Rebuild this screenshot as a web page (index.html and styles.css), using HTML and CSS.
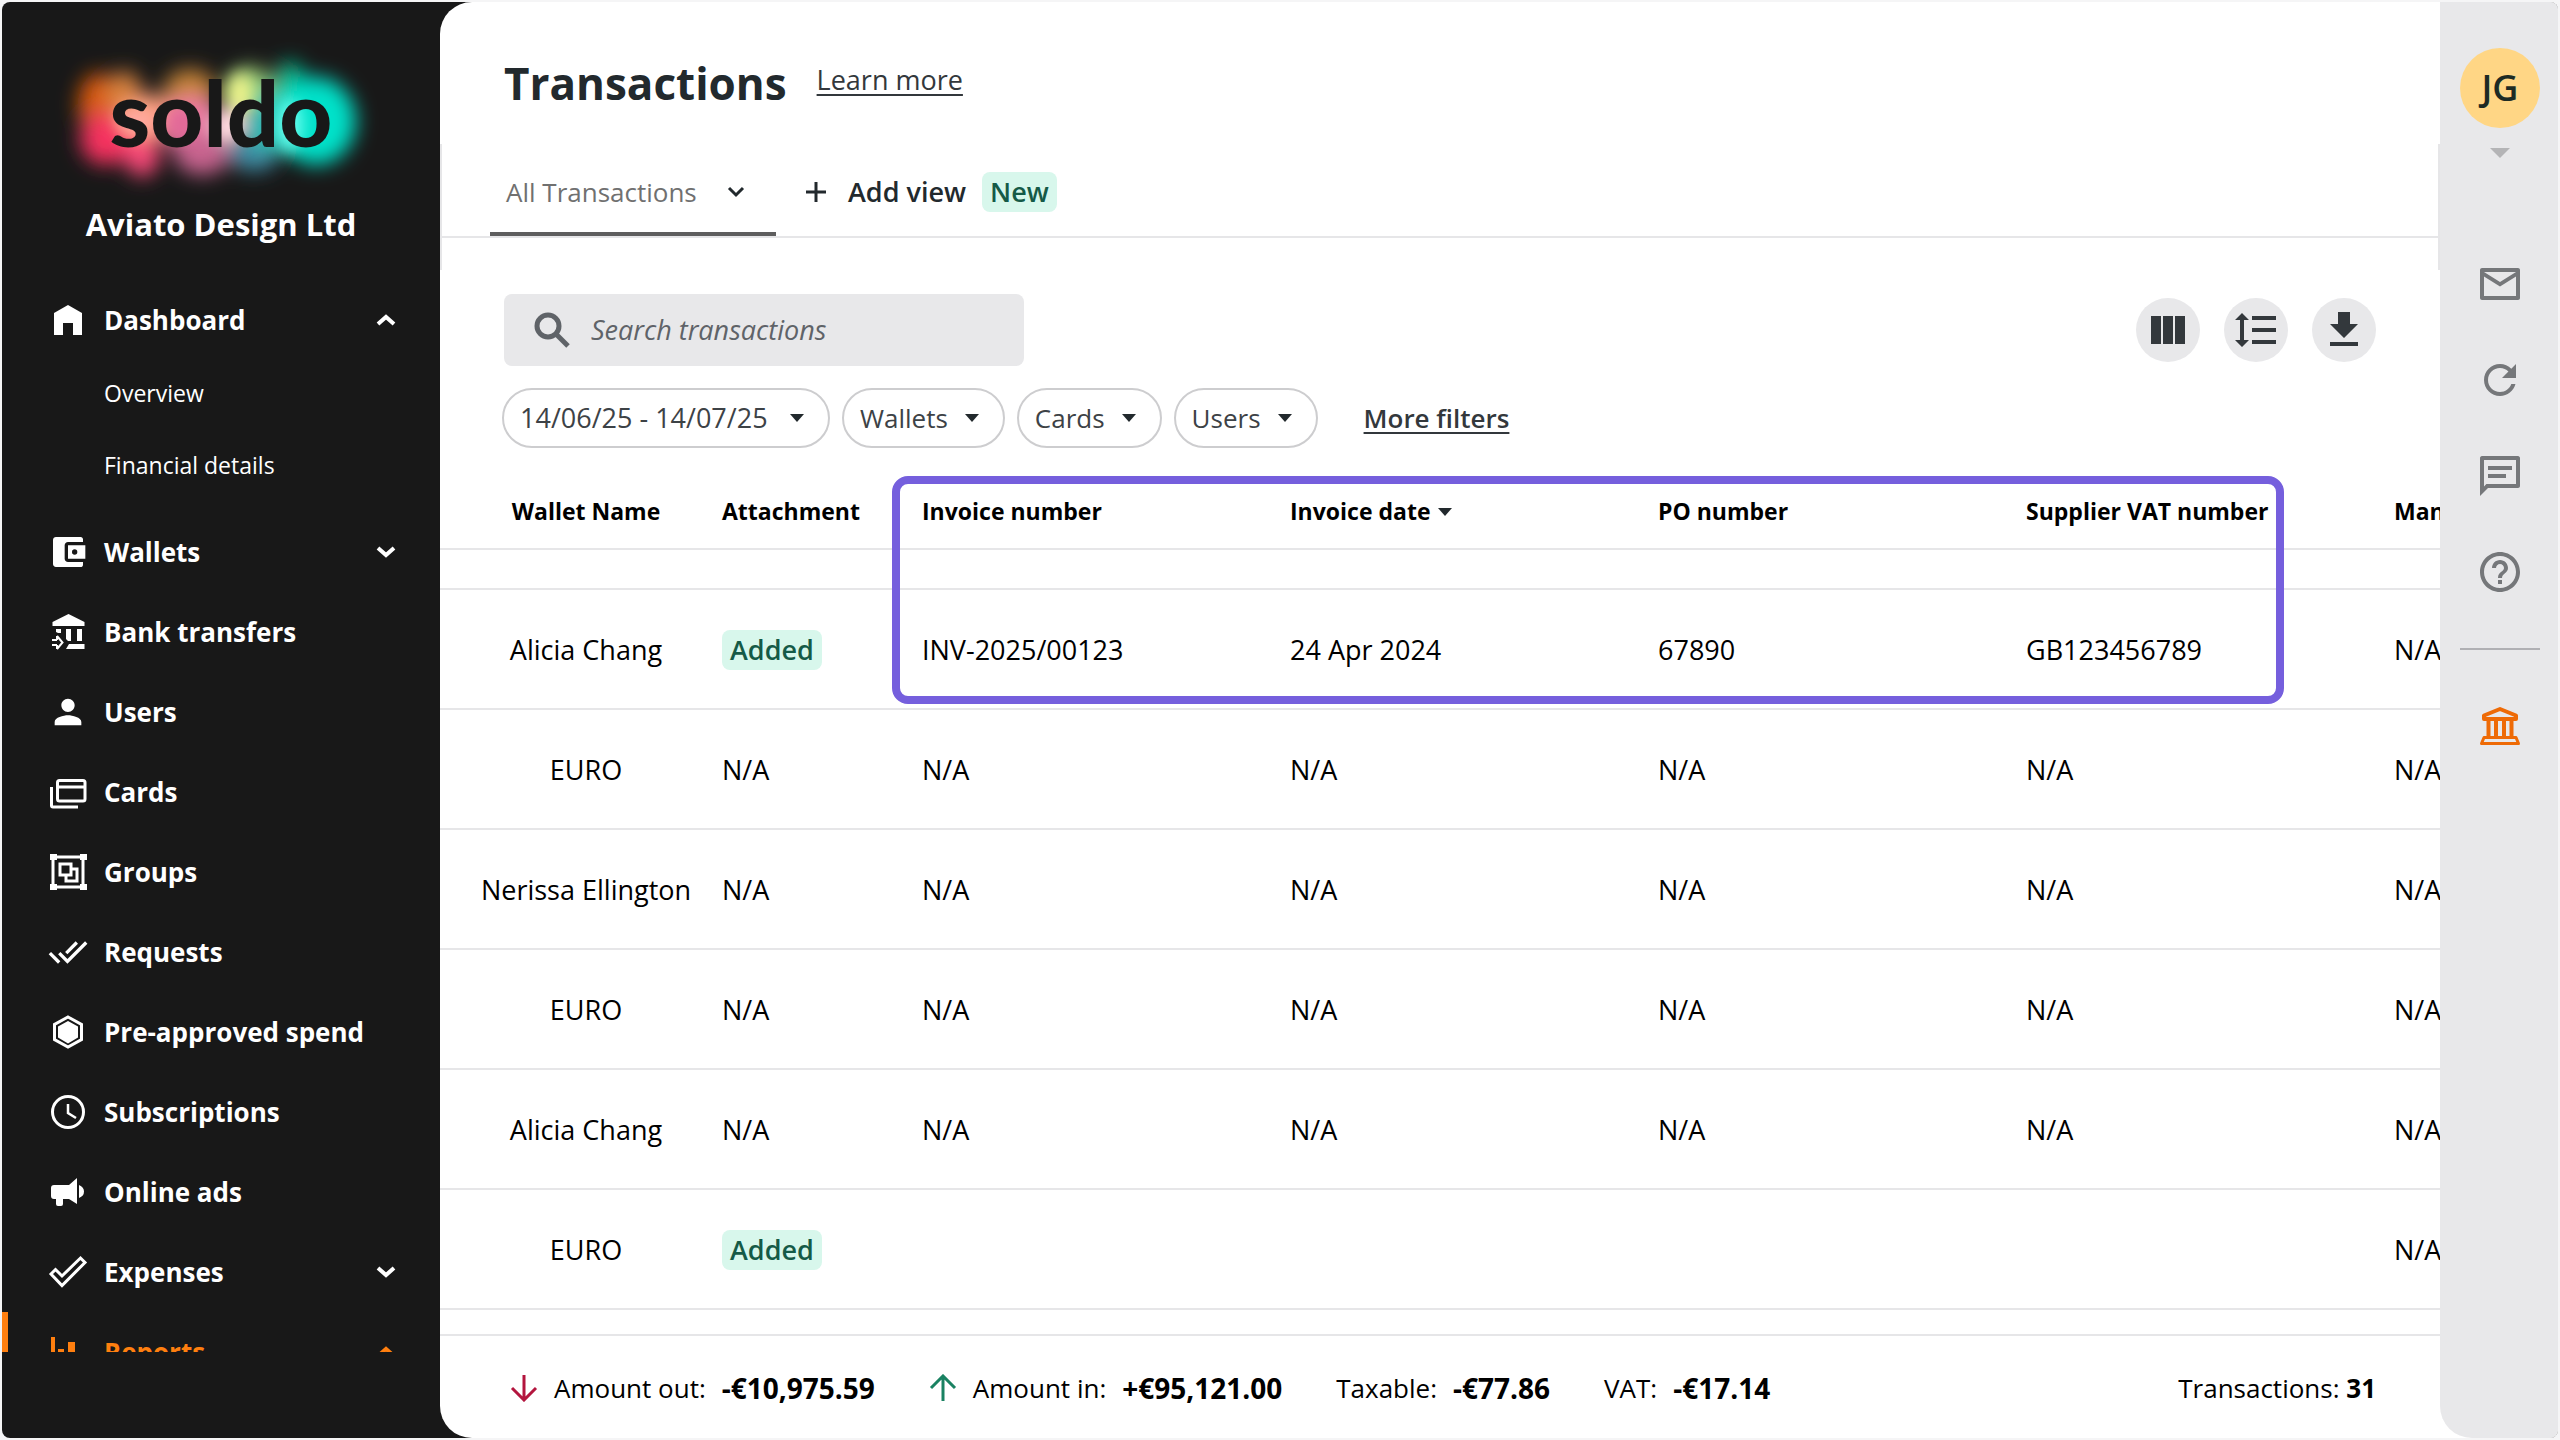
FILE: index.html
```html
<!DOCTYPE html>
<html lang="en">
<head>
<meta charset="utf-8">
<title>Transactions - Soldo</title>
<meta name="viewport" content="width=device-width, initial-scale=1">
<link rel="stylesheet" href="styles.css">
</head>
<body>
<div class="app">
  <aside class="sidebar">
    <div class="brand">
      <svg class="logo" viewBox="0 0 320 160" role="img" aria-label="soldo">
        <defs>
          <filter id="glow" x="-30%" y="-30%" width="160%" height="160%"><feGaussianBlur stdDeviation="10"/></filter>
          <filter id="soft" x="-30%" y="-30%" width="160%" height="160%"><feGaussianBlur stdDeviation="8"/></filter>
        </defs>
        <g transform="translate(-9 1)">
          <g filter="url(#glow)">
            <ellipse cx="46" cy="64" rx="20" ry="32" fill="#d8580a"/>
            <ellipse cx="72" cy="54" rx="18" ry="24" fill="#d8823c"/>
            <ellipse cx="54" cy="98" rx="26" ry="26" fill="#f4305e"/>
            <ellipse cx="90" cy="112" rx="18" ry="24" fill="#f84a78"/>
            <ellipse cx="98" cy="76" rx="28" ry="22" fill="#ffa07a"/>
            <ellipse cx="138" cy="50" rx="26" ry="22" fill="#c98538"/>
            <ellipse cx="140" cy="84" rx="30" ry="28" fill="#f07aa4"/>
            <ellipse cx="150" cy="112" rx="28" ry="22" fill="#c8648f"/>
            <ellipse cx="198" cy="50" rx="24" ry="24" fill="#98cf78"/>
            <ellipse cx="202" cy="110" rx="26" ry="20" fill="#3f8ba4"/>
            <ellipse cx="218" cy="80" rx="24" ry="30" fill="#30bdb0"/>
            <ellipse cx="238" cy="46" rx="16" ry="26" fill="#08b488"/>
            <ellipse cx="264" cy="80" rx="40" ry="44" fill="#00e2ca"/>
          </g>
          <g filter="url(#soft)">
            <ellipse cx="188" cy="54" rx="12" ry="22" fill="#f2f58c"/>
            <ellipse cx="176" cy="86" rx="18" ry="18" fill="#ffd9e0"/>
            <ellipse cx="84" cy="80" rx="20" ry="14" fill="#ffa9a0"/>
            <ellipse cx="238" cy="84" rx="12" ry="26" fill="#6ffff0"/>
            <circle cx="130" cy="82" r="14" fill="#e06696"/>
            <circle cx="206" cy="84" r="12" fill="#28b4b4"/>
          </g>
        </g>
        <text class="logo-text" x="160" y="107" text-anchor="middle">soldo</text>
      </svg>
      <p class="company">Aviato Design Ltd</p>
    </div>
    <nav class="nav" aria-label="Main">
      <ul class="nav-list">
        <li>
          <button class="nav-item" type="button" aria-expanded="true">
            <svg class="nav-icon" viewBox="0 0 40 40"><path fill="currentColor" d="M20 5l14 8v22H25V23H15v12H6V13z"/></svg>
            <span>Dashboard</span>
            <svg class="nav-chevron" viewBox="0 0 20 12"><path d="M2 10l8-7 8 7"/></svg>
          </button>
          <ul class="subnav">
            <li><a href="#overview">Overview</a></li>
            <li><a href="#financial">Financial details</a></li>
          </ul>
        </li>
        <li>
          <button class="nav-item" type="button" aria-expanded="false">
            <svg class="nav-icon" viewBox="0 0 24 24"><path fill="currentColor" d="M21 18v1.600c0 .8-.6 1.400-1.400 1.400H4.800C3.800 21 3 20.200 3 19.200V4.800C3 3.800 3.800 3 4.800 3h14.800c.8 0 1.400.6 1.400 1.400V6h-9c-1.110 0-2 .9-2 2v8c0 1.100.89 2 2 2zm-9-2h10.400V8H12zm4-2.400a1.600 1.600 0 1 1 0-3.200 1.600 1.600 0 0 1 0 3.200z"/></svg>
            <span>Wallets</span>
            <svg class="nav-chevron" viewBox="0 0 20 12"><path d="M2 2l8 7 8-7"/></svg>
          </button>
        </li>
        <li>
          <a class="nav-item" href="#bank">
            <svg class="nav-icon" viewBox="0 0 40 40"><path fill="currentColor" d="M20.500 2L36.500 10v4h-32v-4zM8 17h5v4H10l-2-1zM18 17h5v12h-3l-2-2zM29 17h5v12h-5zM21 32h15.500v5H18z"/><path fill="none" stroke="currentColor" stroke-width="2" d="M4 28h5M4 33h5M9 24v4M9 37v-4M9 24l5.500 6.500L9 37"/></svg>
            <span>Bank transfers</span>
          </a>
        </li>
        <li>
          <a class="nav-item" href="#users">
            <svg class="nav-icon" viewBox="0 0 24 24"><path fill="currentColor" d="M12 12c2.210 0 4-1.790 4-4s-1.790-4-4-4-4 1.790-4 4 1.790 4 4 4zm0 2c-2.670 0-8 1.340-8 4v2h16v-2c0-2.660-5.330-4-8-4z"/></svg>
            <span>Users</span>
          </a>
        </li>
        <li>
          <a class="nav-item" href="#cards">
            <svg class="nav-icon" viewBox="0 0 40 40"><g fill="none" stroke="currentColor" stroke-width="3"><rect x="9.500" y="8.500" width="27.500" height="20.500" rx="2"/><path d="M9 15h28M3.500 15v18.500q0 1.500 1.500 1.500h25"/></g></svg>
            <span>Cards</span>
          </a>
        </li>
        <li>
          <a class="nav-item" href="#groups">
            <svg class="nav-icon" viewBox="0 0 40 40"><path fill="currentColor" d="M2 2h7v6H2zM32 2h7v6h-7zM2 32h7v6H2zM32 32h7v6h-7z"/><g fill="none" stroke="currentColor" stroke-width="3"><path d="M5 5h30v30H5z"/><path d="M12 12h11v11H12zM23 17h6v12H18v-6"/></g></svg>
            <span>Groups</span>
          </a>
        </li>
        <li>
          <a class="nav-item" href="#requests">
            <svg class="nav-icon" viewBox="0 0 24 24"><path fill="currentColor" d="M18 7l-1.410-1.410-6.340 6.340 1.410 1.410L18 7zm4.240-1.410L11.660 16.170 7.480 12l-1.410 1.410L11.660 19l12-12-1.420-1.410zM.41 13.410L6 19l1.410-1.410L1.830 12 .41 13.410z"/></svg>
            <span>Requests</span>
          </a>
        </li>
        <li>
          <a class="nav-item" href="#preapproved">
            <svg class="nav-icon" viewBox="0 0 40 40"><path fill="none" stroke="currentColor" stroke-width="3" d="M20 5l13.500 7.500v15L20 35 6.500 27.500v-15z"/><path fill="currentColor" d="M20 9l10 5.500v11L20 31.500 10 25.500v-11z"/></svg>
            <span>Pre-approved spend</span>
          </a>
        </li>
        <li>
          <a class="nav-item" href="#subscriptions">
            <svg class="nav-icon" viewBox="0 0 40 40"><g fill="none" stroke="currentColor" stroke-width="3"><circle cx="20" cy="20" r="15.500"/><path stroke-width="2.500" d="M20 12v9l8 5"/></g></svg>
            <span>Subscriptions</span>
          </a>
        </li>
        <li>
          <a class="nav-item" href="#ads">
            <svg class="nav-icon" viewBox="0 0 40 40"><path fill="currentColor" d="M6 13h15l8-7v26l-8-5h-6v5q0 2-2 2h-3q-2 0-2-2v-5H6q-3 0-3-3v-8q0-3 3-3zM31 13q5 2 5 6.500T31 26z"/></svg>
            <span>Online ads</span>
          </a>
        </li>
        <li>
          <button class="nav-item" type="button" aria-expanded="false">
            <svg class="nav-icon" viewBox="0 0 40 40"><path fill="none" stroke="currentColor" stroke-width="3" d="M3 22l4.500-4.500L14 24 32.500 6l4.500 4.500L14 33.500z"/></svg>
            <span>Expenses</span>
            <svg class="nav-chevron" viewBox="0 0 20 12"><path d="M2 2l8 7 8-7"/></svg>
          </button>
        </li>
        <li>
          <button class="nav-item active" type="button" aria-expanded="true">
            <svg class="nav-icon" viewBox="0 0 40 40"><path fill="currentColor" d="M3 5h4v28h30v4H3zM10 17h6v13h-6zM20 10h7v20h-7zM30 21h6v9h-6z"/></svg>
            <span>Reports</span>
            <svg class="nav-chevron" viewBox="0 0 20 12"><path d="M2 10l8-7 8 7"/></svg>
          </button>
        </li>
      </ul>
    </nav>
  </aside>

  <div class="content">
    <main class="main">
      <header class="page-head">
        <h1>Transactions</h1>
        <a class="learn" href="#learn">Learn more</a>
      </header>
      <div class="views">
        <div class="tabs">
          <button class="tab" type="button">All Transactions
            <svg class="tab-chevron" viewBox="0 0 20 12"><path d="M3 2l7 7 7-7"/></svg>
          </button>
          <button class="add-view" type="button">
            <svg class="plus" viewBox="0 0 20 20"><path d="M10 0v20M0 10h20"/></svg>
            Add view <span class="badge">New</span>
          </button>
        </div>
      </div>
      <div class="tools">
        <label class="search">
          <svg class="search-icon" viewBox="0 0 36 36"><circle cx="14" cy="14" r="11"/><path d="M21.500 21.500L34 34"/></svg>
          <input type="search" placeholder="Search transactions" aria-label="Search transactions">
        </label>
        <div class="actions">
          <button class="round" type="button" aria-label="Columns"><svg viewBox="0 0 48 48"><path d="M7 10h10v28H7zM19 10h10v28H19zM31 10h10v28H31z"/></svg></button>
          <button class="round" type="button" aria-label="Row height"><svg viewBox="0 0 24 24"><path d="M6 7h2.500L5 3.500 1.500 7H4v10H1.500L5 20.500 8.500 17H6V7zm4-2v2h12V5H10zm0 14h12v-2H10v2zm0-6h12v-2H10v2z"/></svg></button>
          <button class="round" type="button" aria-label="Download"><svg viewBox="0 0 24 24"><path d="M19 9h-4V3H9v6H5l7 7 7-7zM5 18v2h14v-2H5z"/></svg></button>
        </div>
      </div>
      <div class="filters">
        <button class="pill dates" type="button">14/06/25 - 14/07/25 <span class="caret"></span></button>
        <button class="pill" type="button">Wallets <span class="caret"></span></button>
        <button class="pill" type="button">Cards <span class="caret"></span></button>
        <button class="pill" type="button">Users <span class="caret"></span></button>
        <a class="more" href="#filters">More filters</a>
      </div>
      <div class="table-wrap">
        <table>
          <colgroup><col class="c-name"><col class="c-att"><col class="c-data"><col class="c-data"><col class="c-data"><col class="c-data"><col class="c-data"></colgroup>
          <thead>
            <tr><th>Wallet Name</th><th>Attachment</th><th>Invoice number</th><th aria-sort="descending">Invoice date<span class="caret sort"></span></th><th>PO number</th><th>Supplier VAT number</th><th>Man</th></tr>
          </thead>
          <tbody>
            <tr class="partial"><td colspan="7"></td></tr>
            <tr><td>Alicia Chang</td><td><span class="badge">Added</span></td><td>INV-2025/00123</td><td>24 Apr 2024</td><td>67890</td><td>GB123456789</td><td>N/A</td></tr>
            <tr><td>EURO</td><td>N/A</td><td>N/A</td><td>N/A</td><td>N/A</td><td>N/A</td><td>N/A</td></tr>
            <tr><td>Nerissa Ellington</td><td>N/A</td><td>N/A</td><td>N/A</td><td>N/A</td><td>N/A</td><td>N/A</td></tr>
            <tr><td>EURO</td><td>N/A</td><td>N/A</td><td>N/A</td><td>N/A</td><td>N/A</td><td>N/A</td></tr>
            <tr><td>Alicia Chang</td><td>N/A</td><td>N/A</td><td>N/A</td><td>N/A</td><td>N/A</td><td>N/A</td></tr>
            <tr><td>EURO</td><td><span class="badge">Added</span></td><td></td><td></td><td></td><td></td><td>N/A</td></tr>
          </tbody>
        </table>
        <div class="highlight"></div>
      </div>
      <footer class="totals">
        <div class="total out"><svg class="arrow" viewBox="0 0 28 28"><path d="M14 1v25M2 14l12 12 12-12"/></svg>Amount out: <b>-€10,975.59</b></div>
        <div class="total in"><svg class="arrow" viewBox="0 0 28 28"><path d="M14 27V2M2 14L14 2l12 12"/></svg>Amount in: <b>+€95,121.00</b></div>
        <div class="total">Taxable: <b>-€77.86</b></div>
        <div class="total">VAT: <b>-€17.14</b></div>
        <div class="count">Transactions: <b>31</b></div>
      </footer>
    </main>

    <aside class="rail">
      <button class="avatar" type="button">JG</button>
      <span class="caret rail-caret"></span>
      <div class="rail-icons">
        <button type="button" aria-label="Messages"><svg viewBox="0 0 24 24"><path d="M22 5c0-.6-.5-1-1-1H3c-.5 0-1 .4-1 1v14c0 .6.5 1 1 1h18c.5 0 1-.4 1-1zm-2 1l-8 5-8-5zm0 12H4V8.200l8 5 8-5z"/></svg></button>
        <button type="button" aria-label="Refresh"><svg viewBox="0 0 24 24"><path d="M17.650 6.350C16.200 4.900 14.210 4 12 4c-4.420 0-7.990 3.580-7.990 8s3.570 8 7.990 8c3.730 0 6.840-2.550 7.730-6h-2.080c-.82 2.330-3.040 4-5.650 4-3.310 0-6-2.690-6-6s2.690-6 6-6c1.660 0 3.140.69 4.220 1.780L13 11h7V4l-2.350 2.350z"/></svg></button>
        <button type="button" aria-label="Chat"><svg viewBox="0 0 24 24"><path d="M21 2H3c-.6 0-1 .5-1 1v19l4-4h15c.5 0 1-.5 1-1V3c0-.5-.5-1-1-1zm-1 14H5.200L4 17.200V4h16zM6 7h12v2H6zm0 4h9v2H6z"/></svg></button>
        <button type="button" aria-label="Help"><svg viewBox="0 0 24 24"><path d="M11 18h2v-2h-2v2zm1-16C6.480 2 2 6.480 2 12s4.480 10 10 10 10-4.480 10-10S17.520 2 12 2zm0 18c-4.410 0-8-3.590-8-8s3.590-8 8-8 8 3.590 8 8-3.590 8-8 8zm0-14c-2.210 0-4 1.790-4 4h2c0-1.100.9-2 2-2s2 .9 2 2c0 2-3 1.750-3 5h2c0-2.250 3-2.500 3-5 0-2.210-1.790-4-4-4z"/></svg></button>
      </div>
      <hr>
      <button class="bank" type="button" aria-label="Bank account"><svg viewBox="0 0 48 48"><g fill="none" stroke="currentColor" stroke-width="4" stroke-linejoin="round"><path d="M24 7L40 13.500V17H8v-3.500zM12.500 17v19M20 17v19M28 17v19M35.500 17v19"/><path stroke-width="3" d="M8 35.500h32l2.500 6h-37z"/></g></svg></button>
    </aside>
  </div>
</div>
</body>
</html>
```
FILE: styles.css
```css
* { box-sizing: border-box; }

body {
  margin: 0;
  padding: 2px;
  background: #f5f5f6;
  color: #000;
  font-family: "Open Sans", "Noto Sans", sans-serif;
  font-size: 26px;
  line-height: 40px;
}

button, input {
  margin: 0;
  padding: 0;
  border: 0;
  background: none;
  color: inherit;
  font: inherit;
  cursor: pointer;
}

a { color: inherit; }
ul { margin: 0; padding: 0; list-style: none; }
svg { display: block; flex: none; }

.app {
  display: flex;
  height: calc(100vh - 4px);
  overflow: hidden;
  border-radius: 8px;
  background: #181818;
}

/* Sidebar */
.sidebar {
  display: flex;
  flex-direction: column;
  flex: none;
  width: 438px;
  padding-bottom: 86px;
  color: #fff;
}

.brand {
  display: flex;
  flex-direction: column;
  align-items: center;
  height: 278px;
  padding-top: 38px;
}

.logo { width: 320px; height: 160px; overflow: visible; }
.logo-text { font: 900 92px Lato, sans-serif; fill: #181818; }

.company {
  margin: 4px 0 0;
  font-size: 31px;
  font-weight: 700;
}

.nav { flex: 1; min-height: 0; overflow: hidden; }

.nav-item {
  display: flex;
  align-items: center;
  gap: 16px;
  width: 100%;
  height: 80px;
  padding: 0 44px 0 46px;
  font-weight: 700;
  text-align: left;
  text-decoration: none;
}

.nav-icon { width: 40px; height: 40px; }

.nav-chevron {
  width: 20px;
  height: 12px;
  margin-left: auto;
  fill: none;
  stroke: currentColor;
  stroke-width: 4;
}

.nav-item.active {
  color: #ff7f0f;
  background: linear-gradient(#ff7f0f, #ff7f0f) left / 6px 100% no-repeat;
}

.subnav {
  display: grid;
  gap: 6px;
  padding-bottom: 14px;
}

.subnav a {
  display: block;
  padding-left: 102px;
  font-size: 23px;
  line-height: 66px;
  text-decoration: none;
}

/* Main panel */
.content {
  display: flex;
  flex: 1;
  min-width: 0;
  background: #fff;
  border-radius: 32px 0 0 32px;
  overflow: hidden;
}

.main {
  display: flex;
  flex-direction: column;
  flex: 1;
  min-width: 0;
}

.page-head {
  display: flex;
  align-items: center;
  gap: 30px;
  height: 142px;
  padding: 20px 64px 0;
}

h1 {
  margin: 0;
  color: #22292d;
  font-size: 44px;
  font-weight: 700;
  line-height: 64px;
}

.learn, .more {
  color: #33383c;
  text-decoration-thickness: 2px;
  text-underline-offset: 4px;
}

.learn { padding-bottom: 6px; font-size: 27px; }

.views {
  padding-bottom: 32px;
  border: solid #e6e6e8;
  border-width: 0 2px;
}

.tabs {
  display: flex;
  height: 94px;
  padding-left: 48px;
  border-bottom: 2px solid #e6e6e8;
}

.tab {
  display: flex;
  align-items: center;
  justify-content: space-between;
  width: 286px;
  padding: 8px 30px 0 16px;
  border-bottom: 4px solid #5e5e5e;
  color: #707070;
}

.tab-chevron {
  width: 20px;
  height: 12px;
  fill: none;
  stroke: #22292d;
  stroke-width: 3;
}

.add-view {
  display: flex;
  align-items: center;
  gap: 16px;
  padding: 4px 0 0 30px;
  color: #22292d;
  font-size: 27px;
  font-weight: 600;
}

.plus { width: 20px; height: 20px; margin-right: 6px; stroke: #22292d; stroke-width: 3; }

.badge {
  display: inline-block;
  padding: 0 8px;
  border-radius: 8px;
  background: #d8f7ec;
  color: #155a47;
  font-weight: 600;
}

.tools {
  display: flex;
  justify-content: space-between;
  align-items: center;
  padding: 24px 64px 0;
}

.search {
  display: flex;
  align-items: center;
  gap: 21px;
  width: 520px;
  height: 72px;
  padding: 0 30px;
  border-radius: 8px;
  background: #e8e8ea;
  font-size: 27px;
}

.search-icon {
  width: 36px;
  height: 36px;
  fill: none;
  stroke: #5f6368;
  stroke-width: 5;
}

.search input { flex: 1; min-width: 0; outline: 0; cursor: text; }
.search input::placeholder { color: #5f6368; font-style: italic; opacity: 1; }

.actions { display: flex; gap: 24px; }

.round {
  display: grid;
  place-items: center;
  width: 64px;
  height: 64px;
  border-radius: 50%;
  background: #e8e8ea;
}

.round svg { width: 48px; height: 48px; fill: #33383c; }

.filters {
  display: flex;
  align-items: center;
  gap: 12px;
  padding: 22px 62px 28px;
}

.pill {
  display: flex;
  align-items: center;
  justify-content: space-between;
  gap: 17px;
  height: 60px;
  padding: 0 24px 0 16px;
  border: 2px solid #cdcdcf;
  border-radius: 30px;
  color: #3d4246;
}

.dates { min-width: 328px; font-size: 27px; }

.caret {
  flex: none;
  border: solid transparent;
  border-width: 8px 7px 0;
  border-top-color: #22292d;
}

.more { margin-left: 34px; font-weight: 600; }

/* Transactions table */
.table-wrap {
  position: relative;
  flex: 1;
  min-height: 0;
  overflow: hidden;
}

table {
  width: 2322px;
  table-layout: fixed;
  border-collapse: separate;
  border-spacing: 0;
  font-size: 27px;
}

.c-name { width: 282px; }
.c-att { width: 200px; }
.c-data { width: 368px; }

th, td {
  padding: 0;
  border-bottom: 2px solid #e6e6e8;
  text-align: left;
  white-space: nowrap;
}

th { height: 74px; padding-bottom: 2px; font-size: 23px; font-weight: 700; }
td { height: 120px; padding-top: 2px; }
.partial td { height: 40px; }

th:first-child, td:first-child { padding-left: 10px; text-align: center; }

.sort { display: inline-block; margin-left: 8px; vertical-align: 4px; }

.highlight {
  position: absolute;
  top: 0;
  left: 452px;
  width: 1392px;
  height: 228px;
  border: 8px solid #755fdd;
  border-radius: 16px;
}

/* Totals */
.totals {
  display: flex;
  align-items: center;
  gap: 54px;
  height: 104px;
  padding: 2px 64px 0 70px;
  border-top: 2px solid #e6e6e8;
}

.total { display: flex; align-items: center; gap: 16px; }
.total b { font-size: 28px; }
.count { margin-left: auto; }
.arrow { width: 28px; height: 28px; fill: none; stroke-width: 3; }
.out .arrow { stroke: #b3153e; }
.in .arrow { stroke: #1a8262; }

/* Right rail */
.rail {
  display: flex;
  flex-direction: column;
  align-items: center;
  flex: none;
  width: 118px;
  padding: 46px 0 0 2px;
  border-bottom-left-radius: 32px;
  background: #e8e8ea;
  color: #75777a;
}

.avatar {
  width: 80px;
  height: 80px;
  border-radius: 50%;
  background: #ffd685;
  color: #1d2b24;
  font-size: 36px;
  font-weight: 600;
}

.rail-caret {
  margin-top: 20px;
  border-width: 10px 10px 0;
  border-top-color: #b4b4b6;
}

.rail-icons { display: grid; gap: 48px; margin-top: 102px; }
.rail svg { width: 48px; height: 48px; fill: currentColor; }

.rail hr {
  width: 80px;
  height: 2px;
  margin: 52px 0;
  border: 0;
  background: #b0b0b4;
}

.bank { color: #ee6a06; }
```
